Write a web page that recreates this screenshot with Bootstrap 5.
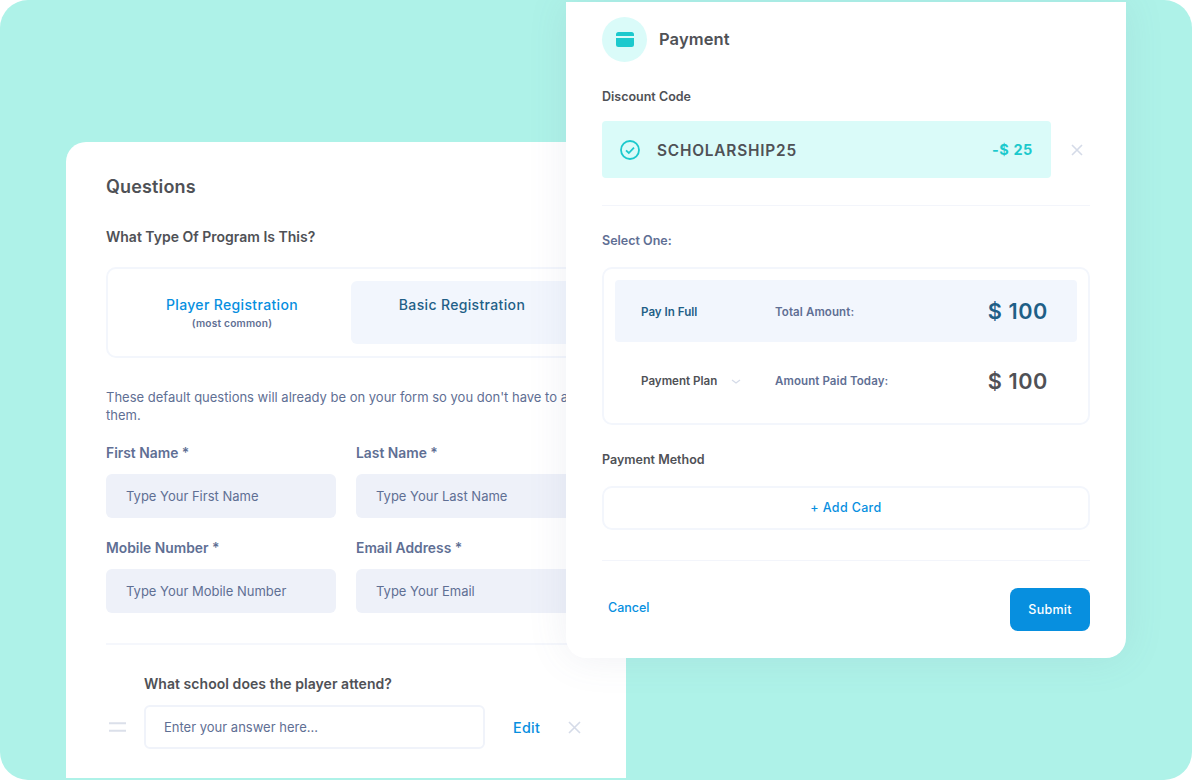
<!DOCTYPE html>
<html lang="en">
<head>
<meta charset="utf-8">
<title>Registration</title>
<link rel="stylesheet" href="https://cdn.jsdelivr.net/npm/bootstrap@5.3.0/dist/css/bootstrap.min.css">
<style>
html,body{margin:0;background:#fff;font-family:"Inter","Liberation Sans",sans-serif;}
.stage{position:relative;width:1192px;height:780px;background:#aef2e8;border-radius:28px;overflow:hidden;}
.win{position:absolute;width:560px;background:#fff;}
.win-q{left:66px;top:142px;height:636px;border-radius:20px 0 0 0;padding:34px 40px 0;}
.win-p{left:566px;top:2px;height:656px;border-radius:0 0 20px 20px;padding:15px 36px 0;box-shadow:0 0 40px rgba(95,111,148,.1);}
.q-title{font-size:18px;font-weight:600;color:#4f5156;line-height:22px;margin:0;letter-spacing:.15px;}
.q-sub{font-size:14px;font-weight:600;color:#4f5156;line-height:20px;margin:29px 0 20px;}
.q-toggle{border:2px solid #f3f6fc;border-radius:10px;height:91px;padding:12px 11px;}
.q-tab{width:222px;height:63px;border-radius:6px;text-align:center;padding-top:13px;font-size:14px;line-height:21px;font-weight:500;letter-spacing:.35px;}
.q-tab-plain{width:226px;margin-right:6px;color:#078fdf;}
.q-tab-on{background:#f2f6fd;color:#1f5f87;}
.q-tab small{display:block;font-size:10.2px;line-height:12px;font-weight:600;color:#5f6f94;margin-top:2px;letter-spacing:.2px;}
.q-note{font-size:13px;line-height:18px;color:#5f6f94;margin:30px 0 0;width:480px;}
.q-grid{display:grid;grid-template-columns:230px 230px;column-gap:20px;row-gap:20px;margin-top:19px;}
.q-label{display:block;font-size:13.85px;line-height:20px;font-weight:600;color:#5f6f94;margin:0 0 11px;}
.q-input.form-control{height:44px;background:#eef1f9;border:0;border-radius:6px;padding:0 20px;font-size:13px;box-shadow:none;}
.q-input.form-control::placeholder{color:#5f6f94;opacity:1;}
.q-rule{border:0;border-top:2px solid #f5f7fc;opacity:1;margin:30px 0 0;width:480px;}
.q-school{font-size:14px;line-height:20px;font-weight:600;color:#4f5156;margin:29px 0 11px 38px;letter-spacing:.05px;}
.q-line{width:476px;}
.q-drag{width:17px;margin:0 18px 0 3px;flex:none;}
.a-input.form-control{width:341px;height:44px;flex:none;border:2px solid #f0f3fa;border-radius:6px;padding:0 18px;font-size:13px;box-shadow:none;}
.a-input.form-control::placeholder{color:#5f6f94;opacity:1;}
.q-edit{font-size:14.3px;font-weight:500;color:#078fdf;margin:2px 0 0 28px;text-decoration:none;letter-spacing:.3px;}
.q-x{margin-left:28px;flex:none;}
.p-badge{width:45px;height:45px;border-radius:50%;background:#dafbf9;flex:none;margin-right:12px;}
.p-title{font-size:16.5px;font-weight:600;color:#4f5156;line-height:20px;letter-spacing:.1px;padding-bottom:2px;}
.p-label{font-size:12.5px;line-height:18px;font-weight:600;color:#4f5156;margin:0;}
.p-label-code{margin:26px 0 15px;}
.p-label-method{margin:26px 0 0;}
.p-code{width:449px;height:57px;background:#dafbf9;border-radius:4px;padding:0 18px;}
.p-code-name{font-size:15.4px;font-weight:600;color:#4f5156;margin:2px 0 0 17px;letter-spacing:.8px;}
.p-code-off{font-size:14.5px;font-weight:700;color:#1cc9cd;margin-left:auto;letter-spacing:.6px;}
.p-code-x{margin-left:20px;flex:none;}
.p-rule{border:0;border-top:1px solid #f3f5fb;opacity:1;margin:0;}
.p-rule-a{margin-top:27px;}
.p-rule-b{margin-top:30px;}
.p-select{font-size:12.5px;line-height:18px;font-weight:600;color:#5f6f94;margin:26px 0 17px;}
.p-opts{border:2px solid #f3f6fc;border-radius:10px;height:158px;padding:11px;}
.p-opt{display:grid;grid-template-columns:134px 1fr auto;align-items:center;height:62px;padding:0 29px 0 26px;border-radius:4px;}
.p-opt-on{background:#f2f6fd;}
.p-opt-off{margin-top:8px;}
.p-name{font-size:11.6px;font-weight:600;color:#4f5156;margin-top:3px;}
.p-opt-off .p-name{margin-top:2px;}
.p-opt-on .p-name{color:#1f5f87;}
.p-desc{font-size:11.5px;font-weight:600;color:#5f6f94;letter-spacing:.1px;margin-top:3px;}
.p-opt-off .p-desc{margin-top:2px;}
.p-amt{font-size:21.7px;font-weight:600;color:#4f5156;letter-spacing:.6px;line-height:24px;}
.p-opt-on .p-amt{color:#1f5f87;}
.p-chev{margin-left:14px;}
.p-add{height:44px;border:2px solid #f3f6fc;border-radius:10px;font-size:12.5px;font-weight:500;color:#078fdf;text-decoration:none;margin-top:17px;letter-spacing:.35px;}
.p-foot{margin-top:27px;}
.p-cancel{font-size:12.5px;font-weight:500;color:#078fdf;text-decoration:none;margin:0 0 3px 6px;}
.p-submit.btn{width:80px;height:43px;background:#078fdf;border:0;border-radius:8px;color:#fff;font-size:12.5px;font-weight:500;padding:2px 0 0;letter-spacing:.25px;}
</style>
</head>
<body>
<div class="stage">
  <section class="win win-q">
    <h2 class="q-title">Questions</h2>
    <p class="q-sub">What Type Of Program Is This?</p>
    <div class="q-toggle d-flex">
      <div class="q-tab q-tab-plain">Player Registration<small>(most common)</small></div>
      <div class="q-tab q-tab-on">Basic Registration</div>
    </div>
    <p class="q-note">These default questions will already be on your form so you don't have to add them.</p>
    <div class="q-grid">
      <div><label class="q-label">First Name *</label><input class="form-control q-input" placeholder="Type Your First Name"></div>
      <div><label class="q-label">Last Name *</label><input class="form-control q-input" placeholder="Type Your Last Name"></div>
      <div><label class="q-label">Mobile Number *</label><input class="form-control q-input" placeholder="Type Your Mobile Number"></div>
      <div><label class="q-label">Email Address *</label><input class="form-control q-input" placeholder="Type Your Email"></div>
    </div>
    <hr class="q-rule">
    <p class="q-school">What school does the player attend?</p>
    <div class="d-flex align-items-center q-line">
      <svg class="q-drag" width="17" height="10" viewBox="0 0 17 10"><path d="M0 1.2h17M0 8.8h17" stroke="#dbe0ea" stroke-width="2"/></svg>
      <input class="form-control a-input" placeholder="Enter your answer here...">
      <a class="q-edit" href="#">Edit</a>
      <svg class="q-x" width="13" height="13" viewBox="0 0 13 13"><path d="M1 1l11 11M12 1L1 12" stroke="#d5dbe8" stroke-width="1.6" fill="none"/></svg>
    </div>
  </section>

  <section class="win win-p">
    <div class="d-flex align-items-center">
      <div class="p-badge d-flex align-items-center justify-content-center">
        <svg width="18" height="15" viewBox="0 0 18 15"><path d="M2.5 0h13A2.5 2.5 0 0 1 18 2.5V4H0V2.5A2.5 2.5 0 0 1 2.5 0zM0 6h18v6.5a2.5 2.5 0 0 1-2.5 2.5h-13A2.5 2.5 0 0 1 0 12.5z" fill="#1cc9cd"/></svg>
      </div>
      <div class="p-title">Payment</div>
    </div>
    <p class="p-label p-label-code">Discount Code</p>
    <div class="d-flex align-items-center">
      <div class="p-code d-flex align-items-center">
        <svg width="20" height="20" viewBox="0 0 20 20"><circle cx="10" cy="10" r="9" fill="none" stroke="#1cc9cd" stroke-width="1.8"/><path d="M6 10.4l2.8 2.6L14 7.6" fill="none" stroke="#1cc9cd" stroke-width="1.8"/></svg>
        <span class="p-code-name">SCHOLARSHIP25</span>
        <span class="p-code-off">-$ 25</span>
      </div>
      <svg class="p-code-x" width="12" height="12" viewBox="0 0 12 12"><path d="M1 1l10 10M11 1L1 11" stroke="#d5dbe8" stroke-width="1.6" fill="none"/></svg>
    </div>
    <hr class="p-rule p-rule-a">
    <p class="p-select">Select One:</p>
    <div class="p-opts">
      <div class="p-opt p-opt-on">
        <span class="p-name">Pay In Full</span><span class="p-desc">Total Amount:</span><span class="p-amt">$ 100</span>
      </div>
      <div class="p-opt p-opt-off">
        <span class="p-name d-flex align-items-center">Payment Plan<svg class="p-chev" width="10" height="6" viewBox="0 0 10 6"><path d="M1 1l4 3 4-3" fill="none" stroke="#d5dbe8" stroke-width="1.3"/></svg></span><span class="p-desc">Amount Paid Today:</span><span class="p-amt">$ 100</span>
      </div>
    </div>
    <p class="p-label p-label-method">Payment Method</p>
    <a class="p-add d-flex align-items-center justify-content-center" href="#">+ Add Card</a>
    <hr class="p-rule p-rule-b">
    <div class="d-flex align-items-center justify-content-between p-foot">
      <a class="p-cancel" href="#">Cancel</a>
      <button type="button" class="btn p-submit">Submit</button>
    </div>
  </section>
</div>
<script src="https://cdn.jsdelivr.net/npm/bootstrap@5.3.0/dist/js/bootstrap.bundle.min.js"></script>
</body>
</html>
